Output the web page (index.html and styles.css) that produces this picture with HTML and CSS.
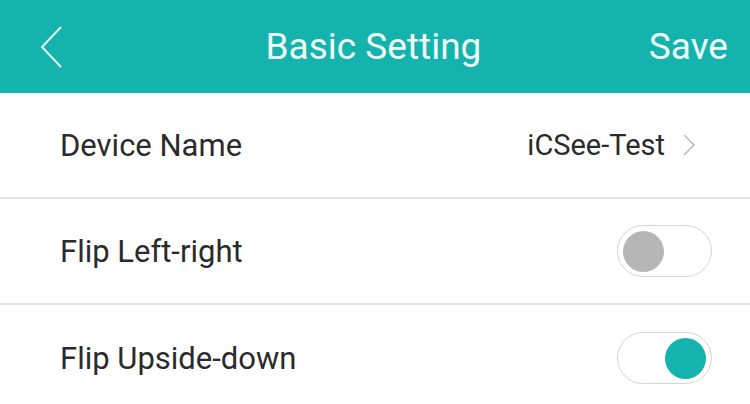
FILE: index.html
```html
<!DOCTYPE html>
<html>
<head>
<meta charset="utf-8">
<link rel="stylesheet" href="styles.css">
</head>
<body>
<div class="app">
  <header class="topbar">
    <div class="back">
      <svg width="24" height="44" viewBox="0 0 24 44"><polyline points="21,2 2,22 21,42" fill="none" stroke="#e6f8f6" stroke-width="2"/></svg>
    </div>
    <div class="title">Basic Setting</div>
    <div class="save">Save</div>
  </header>
  <div class="row">
    <span class="label">Device Name</span>
    <span class="value">iCSee-Test
      <svg class="chev" width="14" height="22" viewBox="0 0 14 22"><polyline points="2,1 12,11 2,21" fill="none" stroke="#bdbdbd" stroke-width="1.6"/></svg>
    </span>
  </div>
  <div class="row">
    <span class="label">Flip Left-right</span>
    <span class="switch"><span class="knob"></span></span>
  </div>
  <div class="row">
    <span class="label">Flip Upside-down</span>
    <span class="switch on"><span class="knob"></span></span>
  </div>
</div>
</body>
</html>
```
FILE: styles.css
```css
html, body {
  margin: 0;
  padding: 0;
  background: #ffffff;
}
.app {
  width: 750px;
  height: 404px;
  overflow: hidden;
  font-family: Roboto, "Liberation Sans", sans-serif;
}
.topbar {
  height: 93px;
  background: #14b3ad;
  display: flex;
  align-items: center;
  padding: 0 22px 0 40px;
  box-sizing: border-box;
  color: #eefcfa;
}
.back {
  width: 24px;
  height: 44px;
  display: flex;
}
.title {
  flex: 1;
  text-align: center;
  font-size: 37px;
  padding-left: 34px;
}
.save {
  font-size: 37px;
}
.row {
  height: 106px;
  box-sizing: border-box;
  border-bottom: 2px solid #e2e2e2;
  display: flex;
  align-items: center;
  justify-content: space-between;
  padding: 0 38px 0 60px;
}
.row:last-child {
  border-bottom: none;
}
.label {
  font-size: 31px;
  color: #2b2b2b;
}
.value {
  font-size: 29px;
  color: #2b2b2b;
  display: flex;
  align-items: center;
  gap: 17px;
  padding-right: 16px;
}
.chev {
  display: block;
}
.switch {
  width: 95px;
  height: 52px;
  box-sizing: border-box;
  border: 1.5px solid #d6d6d6;
  border-radius: 26px;
  display: flex;
  align-items: center;
  padding: 0 5px;
}
.switch .knob {
  width: 41px;
  height: 41px;
  border-radius: 50%;
  background: #b6b6b6;
}
.switch.on {
  justify-content: flex-end;
}
.switch.on .knob {
  background: #14b3ad;
}
```
